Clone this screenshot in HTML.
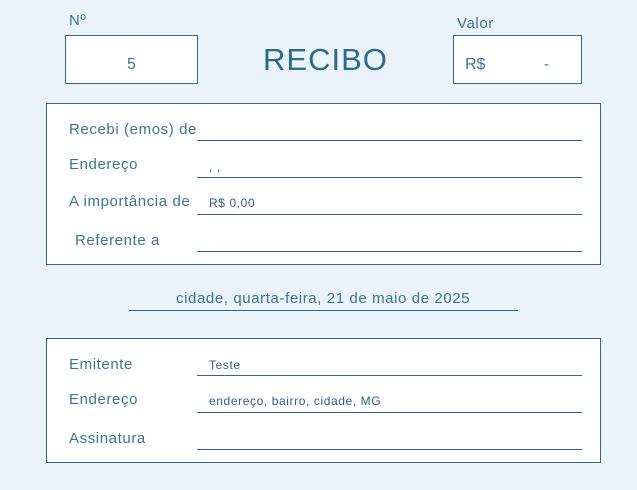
<!DOCTYPE html>
<html><head><meta charset="utf-8"><style>
*{margin:0;padding:0;box-sizing:border-box}
body{width:637px;height:490px;background:#eaf3f9;font-family:"Liberation Sans",sans-serif;color:#2f6f8f;position:relative;overflow:hidden}
.a{position:absolute;white-space:nowrap}
.box{position:absolute;background:#fff;border:1px solid #2f6a85}
.ln{position:absolute;height:1px;background:#2f6a85}
.lb{font-size:15px;color:#3a7593;letter-spacing:0.6px}
.v{font-size:12px;color:#2f5f80;letter-spacing:0.6px}
</style></head><body>
<div class="a lb" style="left:69px;top:12px">Nº</div>
<div class="box" style="left:65px;top:35px;width:133px;height:49px"></div>
<div class="a" style="left:127px;top:56px;font-size:16px;color:#3a7593">5</div>
<div class="a" style="left:263px;top:42px;font-size:31px;color:#2a6b8c;letter-spacing:1px">RECIBO</div>
<div class="a lb" style="left:457px;top:15px">Valor</div>
<div class="box" style="left:453px;top:35px;width:129px;height:49px"></div>
<div class="a" style="left:465px;top:56px;font-size:16px;color:#3a7593">R$</div>
<div class="a" style="left:544px;top:56px;font-size:15px;color:#3a7593">-</div>

<div class="box" style="left:46px;top:103px;width:555px;height:162px"></div>
<div class="a lb" style="left:69px;top:121px">Recebi (emos) de</div>
<div class="ln" style="left:197px;top:140px;width:385px"></div>
<div class="a lb" style="left:69px;top:156px">Endereço</div>
<div class="a v" style="left:209px;top:160px">, ,</div>
<div class="ln" style="left:197px;top:177px;width:385px"></div>
<div class="a lb" style="left:69px;top:193px">A importância de</div>
<div class="a v" style="left:209px;top:196px">R$ 0,00</div>
<div class="ln" style="left:197px;top:214px;width:385px"></div>
<div class="a lb" style="left:75px;top:232px">Referente a</div>
<div class="ln" style="left:197px;top:251px;width:385px"></div>

<div class="a lb" style="left:176px;top:290px">cidade, quarta-feira, 21 de maio de 2025</div>
<div class="ln" style="left:129px;top:310px;width:389px"></div>

<div class="box" style="left:46px;top:338px;width:555px;height:125px"></div>
<div class="a lb" style="left:69px;top:356px">Emitente</div>
<div class="a v" style="left:209px;top:358px">Teste</div>
<div class="ln" style="left:197px;top:375px;width:385px"></div>
<div class="a lb" style="left:69px;top:391px">Endereço</div>
<div class="a v" style="left:209px;top:394px">endereço, bairro, cidade, MG</div>
<div class="ln" style="left:197px;top:412px;width:385px"></div>
<div class="a lb" style="left:69px;top:430px">Assinatura</div>
<div class="ln" style="left:197px;top:449px;width:385px"></div>
</body></html>
